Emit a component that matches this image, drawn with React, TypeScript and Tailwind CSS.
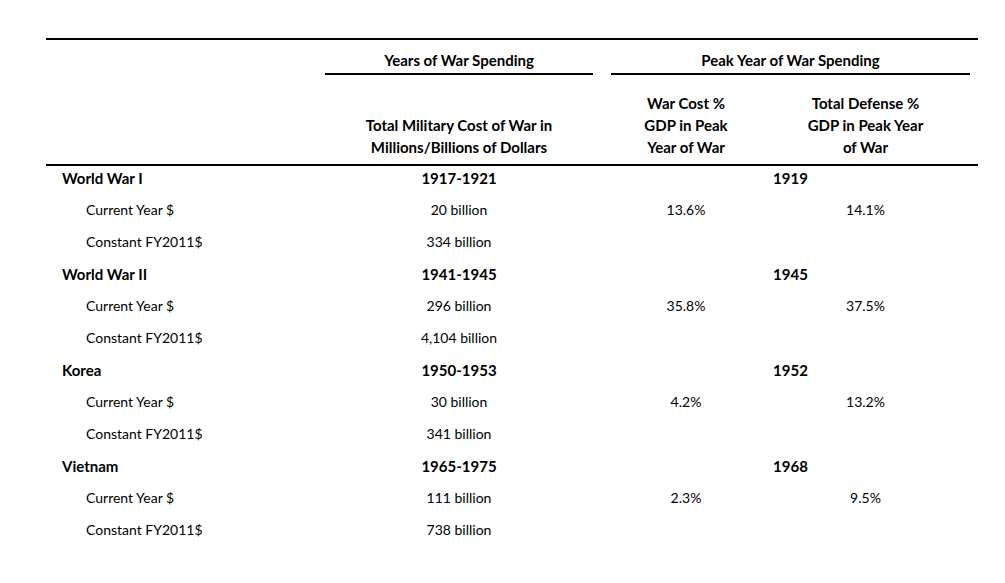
import React from "react";

type Row = {
  label: string;
  group?: boolean;
  years?: string;
  cost?: string;
  peak?: string;
  warPct?: string;
  defPct?: string;
};

const wars: { name: string; years: string; peak: string; cur: string; con: string; warPct: string; defPct: string }[] = [
  { name: "World War I", years: "1917-1921", peak: "1919", cur: "20 billion", con: "334 billion", warPct: "13.6%", defPct: "14.1%" },
  { name: "World War II", years: "1941-1945", peak: "1945", cur: "296 billion", con: "4,104 billion", warPct: "35.8%", defPct: "37.5%" },
  { name: "Korea", years: "1950-1953", peak: "1952", cur: "30 billion", con: "341 billion", warPct: "4.2%", defPct: "13.2%" },
  { name: "Vietnam", years: "1965-1975", peak: "1968", cur: "111 billion", con: "738 billion", warPct: "2.3%", defPct: "9.5%" },
];

const rows: Row[] = wars.flatMap((w) => [
  { label: w.name, group: true, years: w.years, peak: w.peak },
  { label: "Current Year $", cost: w.cur, warPct: w.warPct, defPct: w.defPct },
  { label: "Constant FY2011$", cost: w.con },
]);

const App: React.FC = () => {
  return (
    <div className="w-[1005px] h-[583px] bg-white text-black font-['Lato','Liberation_Sans',sans-serif] pt-[38px] pl-[46px]">
      <div className="w-[932px] border-t-2 border-black">
        {/* group headings */}
        <div className="flex text-[15px] font-bold leading-[22px]">
          <div className="w-[279px]" />
          <div className="w-[268px] text-center pt-[9px] pb-[2px] border-b-2 border-black">Years of War Spending</div>
          <div className="w-[18px]" />
          <div className="w-[359px] text-center pt-[9px] pb-[2px] border-b-2 border-black">Peak Year of War Spending</div>
        </div>

        {/* column headings */}
        <div className="flex items-end text-[15px] font-bold leading-[22px] pb-[6px] border-b-2 border-black h-[91px]">
          <div className="w-[279px]" />
          <div className="w-[268px] text-center">
            Total Military Cost of War in
            <br />
            Millions/Billions of Dollars
          </div>
          <div className="w-[18px]" />
          <div className="w-[150px] text-center">
            War Cost %
            <br />
            GDP in Peak
            <br />
            Year of War
          </div>
          <div className="w-[209px] text-center">
            Total Defense %
            <br />
            GDP in Peak Year
            <br />
            of War
          </div>
        </div>

        {/* body */}
        {rows.map((r, i) => (
          <div key={i} className={`flex h-[32px] pt-[2px] leading-[20px] ${r.group ? "text-[15px] font-bold" : "text-[14px]"}`}>
            <div className={`w-[279px] ${r.group ? "pl-[16px]" : "pl-[40px]"}`}>{r.label}</div>
            <div className="w-[268px] text-center">{r.group ? r.years : r.cost}</div>
            <div className="w-[18px]" />
            {r.group ? (
              <div className="w-[359px] text-center">{r.peak}</div>
            ) : (
              <>
                <div className="w-[150px] text-center">{r.warPct}</div>
                <div className="w-[209px] text-center">{r.defPct}</div>
              </>
            )}
          </div>
        ))}
      </div>
    </div>
  );
};

export default App;
